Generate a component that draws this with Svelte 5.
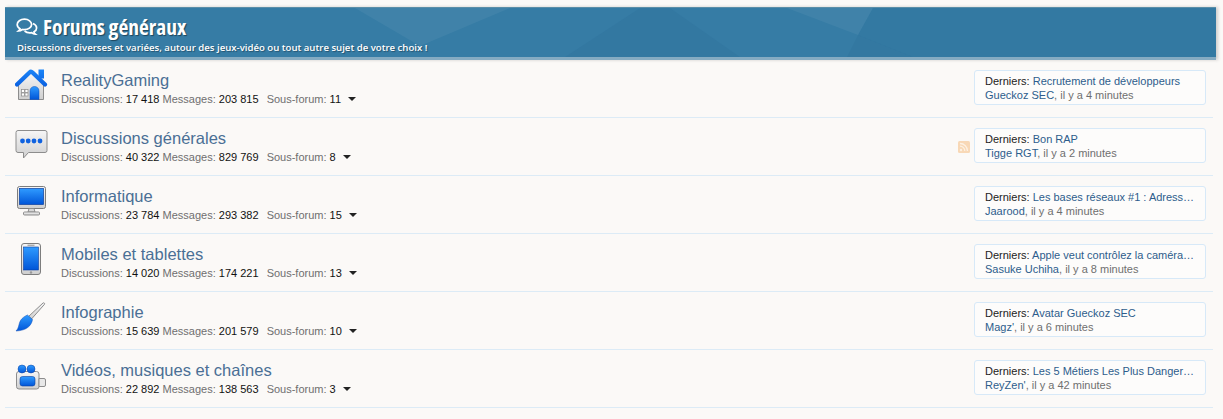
<script lang="ts">
    interface Forum {
        title: string;
        icon: string;
        discussions: string;
        messages: string;
        sub: number;
        last: string;
        author: string;
        ago: string;
        rss?: boolean;
    }

    const forums: Forum[] = [
        { title: "RealityGaming", icon: "home", discussions: "17 418", messages: "203 815", sub: 11, last: "Recrutement de développeurs", author: "Gueckoz SEC", ago: "il y a 4 minutes" },
        { title: "Discussions générales", icon: "chat", discussions: "40 322", messages: "829 769", sub: 8, last: "Bon RAP", author: "Tigge RGT", ago: "il y a 2 minutes", rss: true },
        { title: "Informatique", icon: "screen", discussions: "23 784", messages: "293 382", sub: 15, last: "Les bases réseaux #1 : Adress…", author: "Jaarood", ago: "il y a 4 minutes" },
        { title: "Mobiles et tablettes", icon: "tablet", discussions: "14 020", messages: "174 221", sub: 13, last: "Apple veut contrôlez la caméra…", author: "Sasuke Uchiha", ago: "il y a 8 minutes" },
        { title: "Infographie", icon: "brush", discussions: "15 639", messages: "201 579", sub: 10, last: "Avatar Gueckoz SEC", author: "Magz'", ago: "il y a 6 minutes" },
        { title: "Vidéos, musiques et chaînes", icon: "camera", discussions: "22 892", messages: "138 563", sub: 3, last: "Les 5 Métiers Les Plus Danger…", author: "ReyZen'", ago: "il y a 42 minutes" }
    ];
</script>

<svg class="defs" width="0" height="0" aria-hidden="true">
    <defs>
        <linearGradient id="blue" x1="0" y1="0" x2="0" y2="1">
            <stop offset="0" stop-color="#2f9bff" />
            <stop offset="1" stop-color="#0055d8" />
        </linearGradient>
        <linearGradient id="roof" gradientUnits="userSpaceOnUse" x1="0" y1="0" x2="0" y2="18">
            <stop offset="0" stop-color="#1c86f8" />
            <stop offset="1" stop-color="#0a5fe0" />
        </linearGradient>
        <linearGradient id="grey" x1="0" y1="0" x2="0" y2="1">
            <stop offset="0" stop-color="#f6f6f6" />
            <stop offset="1" stop-color="#cfcfcf" />
        </linearGradient>
    </defs>
</svg>

<main class="page">
    <header class="head">
        <svg class="facets" viewBox="0 0 1211 49" preserveAspectRatio="none" aria-hidden="true">
            <polygon points="350,0 505,0 415,38" fill="#fff" opacity="0.05" />
            <polygon points="635,0 665,0 735,49 560,49" fill="#1f5f88" opacity="0.13" />
            <polygon points="782,0 868,0 853,27" fill="#fff" opacity="0.05" />
            <polygon points="853,27 908,49 842,49" fill="#1f5f88" opacity="0.13" />
            <polygon points="868,0 1211,0 1211,49 908,49 853,27" fill="#1f5f88" opacity="0.1" />
        </svg>
        <h2 class="head-title">
            <svg class="bubbles" viewBox="0 0 22 18" aria-hidden="true">
                <path d="M8.500 1.200C4.400 1.200 1.200 3.600 1.200 6.500c0 1.700 1.100 3.200 2.800 4.200-.2.900-.8 1.700-1.500 2.300 1.500-.1 2.800-.7 3.800-1.500.7.100 1.300.2 2 .2 4.100 0 7.300-2.400 7.300-5.200S12.600 1.200 8.500 1.200Z" fill="none" stroke="#fff" stroke-width="1.700" />
                <path d="M17 5.500c2.100.9 3.600 2.500 3.600 4.400 0 1.600-1 3-2.600 3.900.1.900.6 1.700 1.300 2.300-1.500-.1-2.700-.7-3.600-1.500-.6.100-1.200.2-1.900.2-2.100 0-4-.7-5.200-1.800" fill="none" stroke="#fff" stroke-width="1.700" />
            </svg>
            <span class="head-name">Forums généraux</span>
        </h2>
        <p class="head-desc">Discussions diverses et variées, autour des jeux-vidéo ou tout autre sujet de votre choix !</p>
    </header>

    <ol class="list">
        {#each forums as f}
            <li class="row">
                <span class="icon">
                    <svg viewBox="0 0 34 34" width="34" height="34" aria-hidden="true">
                        {#if f.icon === "home"}
                            <path d="M3.500 14 16 4l12.500 10v16.500H3.500Z" fill="url(#grey)" stroke="#8d8d8d" />
                            <rect x="23.500" y="0.500" width="5.500" height="9" fill="url(#roof)" />
                            <path d="M2 15.500 14.500 3.500q1.500-1.500 3 0L30 15.500" fill="none" stroke="url(#roof)" stroke-width="4.200" stroke-linecap="round" stroke-linejoin="round" />
                            <path d="M15 30.500V22c0-6 9-6 9 0v8.500Z" fill="url(#blue)" stroke="#0a4db8" stroke-width=".5" />
                            <g fill="#fff" stroke="#8a8a8a" stroke-width=".7">
                                <rect x="6.500" y="20.500" width="3" height="3" />
                                <rect x="10" y="20.500" width="3" height="3" />
                                <rect x="6.500" y="24" width="3" height="3" />
                                <rect x="10" y="24" width="3" height="3" />
                            </g>
                        {:else if f.icon === "chat"}
                            <path d="M3 3.500h27q2 0 2 2v18q0 2-2 2H13.500l-5 5.500v-5.500H3q-2 0-2-2v-18q0-2 2-2Z" fill="url(#grey)" stroke="#8d8d8d" />
                            <g fill="#0f62e0">
                                <circle cx="7.500" cy="14" r="2.400" />
                                <circle cx="13.200" cy="14" r="2.400" />
                                <circle cx="19" cy="14" r="2.400" />
                                <circle cx="25" cy="14" r="2.400" />
                            </g>
                        {:else if f.icon === "screen"}
                            <rect x="2.500" y="1.500" width="28" height="22" rx="2" fill="url(#grey)" stroke="#7d7d7d" />
                            <rect x="4.500" y="3.500" width="24" height="16" fill="url(#blue)" stroke="#0a3fa0" stroke-width=".7" />
                            <path d="M14 23.500h5l1 3.500h-7Z" fill="#d8d8d8" stroke="#8d8d8d" />
                            <rect x="8.500" y="27" width="16" height="3" rx="1" fill="url(#grey)" stroke="#8d8d8d" />
                        {:else if f.icon === "tablet"}
                            <rect x="6.500" y="0.500" width="19" height="31" rx="2.500" fill="url(#grey)" stroke="#7d7d7d" />
                            <rect x="8.500" y="4" width="15" height="23" fill="url(#blue)" stroke="#0a3fa0" stroke-width=".6" />
                            <path d="M12.500 2.200h7" stroke="#8a8a8a" />
                            <circle cx="16" cy="29.500" r="1.200" fill="#999" />
                        {:else if f.icon === "brush"}
                            <path d="M28 2c.9-.7 2 .3 1.500 1.300L16.500 18l-3-2.500Z" fill="url(#grey)" stroke="#8d8d8d" />
                            <path d="M12.500 14 17.500 18.500c-1 6-5.500 11-16.500 11.500 3-2.500 2.500-7 4.500-10.500 1.500-2.500 4.500-4.500 7-5.500Z" fill="url(#blue)" stroke="#0a4db8" stroke-width=".5" />
                        {:else if f.icon === "camera"}
                            <rect x="1.500" y="12.500" width="22.500" height="17.500" rx="2.500" fill="url(#grey)" stroke="#8d8d8d" />
                            <path d="M24 19.500h5q1.500 0 1.500 1.500v5q0 1.500-1.500 1.500h-5Z" fill="#e8e8e8" stroke="#8d8d8d" />
                            <circle cx="7" cy="10" r="4" fill="url(#blue)" stroke="#0a3fa0" stroke-width=".5" />
                            <circle cx="16" cy="10" r="4" fill="url(#blue)" stroke="#0a3fa0" stroke-width=".5" />
                            <rect x="5" y="17.500" width="15" height="9.500" rx="2.500" fill="url(#blue)" stroke="#0a3fa0" stroke-width=".6" />
                        {/if}
                    </svg>
                </span>
                <div class="main">
                    <h3 class="title">{f.title}</h3>
                    <div class="stats">
                        <span class="label">Discussions:</span> <b>{f.discussions}</b>
                        <span class="label">Messages:</span> <b>{f.messages}</b>
                        <span class="label sub">Sous-forum:</span> <b>{f.sub}</b>
                        <span class="caret"></span>
                    </div>
                </div>
                {#if f.rss}
                    <svg class="rss" viewBox="0 0 12 12" aria-hidden="true">
                        <rect width="12" height="12" rx="1.500" fill="#f8d8b6" />
                        <circle cx="3" cy="9" r="1.200" fill="#fdf1e3" />
                        <path d="M2 5.200A4.800 4.800 0 0 1 6.800 10M2 2.500A7.500 7.500 0 0 1 9.500 10" fill="none" stroke="#fdf1e3" stroke-width="1.300" />
                    </svg>
                {/if}
                <div class="last">
                    <div class="line"><span class="dark">Derniers:</span> <a href="#top">{f.last}</a></div>
                    <div class="line"><a href="#top">{f.author}</a><span class="comma">,</span> <span class="label">{f.ago}</span></div>
                </div>
            </li>
        {/each}
    </ol>
</main>

<style>
    :global(body) {
        margin: 0;
        background: #fbf9f7;
    }

    .defs {
        position: absolute;
    }

    .page {
        padding: 7px 7px 0 5px;
        font-family: "Liberation Sans", Arial, sans-serif;
        font-size: 11px;
    }

    .head {
        position: relative;
        overflow: hidden;
        height: 49px;
        background: #367ca5;
        border-top: 1px solid #5a8ea8;
        border-bottom: 3px solid #85abc2;
        color: #fff;
        box-shadow: 2px 0 3px rgba(80, 80, 80, 0.25);
    }

    .facets {
        position: absolute;
        inset: 0;
        width: 100%;
        height: 100%;
    }

    .head-title {
        position: relative;
        display: flex;
        align-items: center;
        margin: 0;
        padding: 5px 0 0 11px;
        height: 28px;
        font-family: "Open Sans", sans-serif;
        font-size: 21.5px;
        line-height: 28px;
        font-weight: 700;
        font-stretch: 75%;
        text-shadow: 1px 1px 1px rgba(0, 0, 0, 0.45);
    }

    .bubbles {
        width: 22px;
        height: 18px;
        margin-right: 5px;
    }

    .head-desc {
        position: relative;
        margin: 0;
        padding: 0 0 0 12px;
        font-family: "Open Sans", sans-serif;
        font-size: 9.6px;
        line-height: 13px;
        font-weight: 600;
        text-shadow: 1px 1px 1px rgba(0, 0, 0, 0.35);
    }

    .list {
        list-style: none;
        margin: 0;
        padding: 0 3px 0 0;
    }

    .row {
        display: flex;
        align-items: flex-start;
        height: 57px;
        border-bottom: 1px solid #dcebf6;
    }

    .icon {
        flex: none;
        width: 34px;
        height: 34px;
        margin: 9px 0 0 10px;
    }

    .main {
        flex: 1;
        padding: 8px 0 0 12px;
    }

    .title {
        margin: 0;
        font-size: 16.5px;
        line-height: 24px;
        font-weight: 400;
        color: #4a6f95;
    }

    .stats {
        line-height: 14px;
        color: #111;
    }

    .stats b {
        font-weight: 400;
    }

    .label {
        color: #6f6f6f;
    }

    .sub {
        margin-left: 5px;
    }

    .caret {
        display: inline-block;
        width: 0;
        height: 0;
        margin-left: 4px;
        vertical-align: 2px;
        border: 4px solid transparent;
        border-top-color: #222;
        border-bottom: 0;
    }

    .rss {
        flex: none;
        width: 12px;
        height: 12px;
        margin: 23px 4px 0 0;
    }

    .last {
        flex: none;
        box-sizing: border-box;
        width: 232px;
        height: 35px;
        margin: 10px 7px 0 0;
        padding: 3px 10px 0;
        background: #fdfcfb;
        border: 1px solid #d7e9f8;
        border-radius: 3px;
        line-height: 14px;
    }

    .line {
        white-space: nowrap;
    }

    .dark {
        color: #222;
    }

    .last a {
        color: #2d5c8c;
        text-decoration: none;
    }

    .comma {
        color: #6f6f6f;
    }
</style>
